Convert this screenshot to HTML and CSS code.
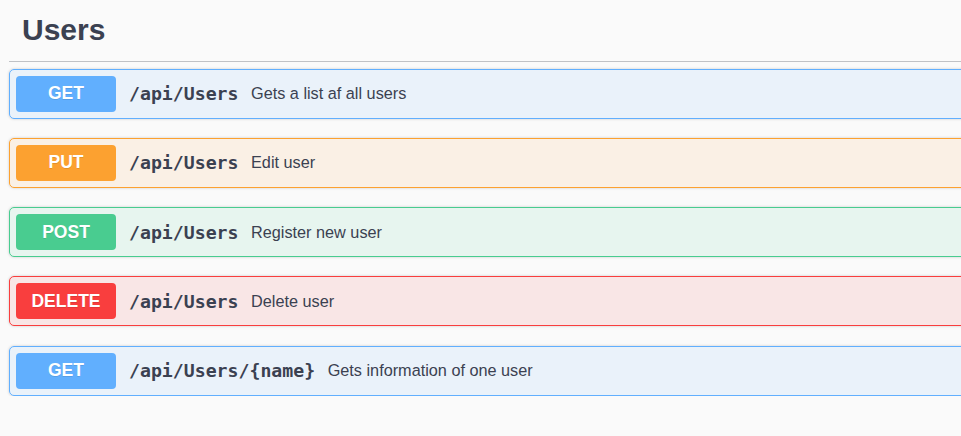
FILE: index.html
```html
<!DOCTYPE html>
<html lang="en">
<head>
<meta charset="utf-8">
<title>Users</title>
<link rel="stylesheet" href="styles.css">
</head>
<body>
<section class="tag-section">
  <h4 class="tag-title">Users</h4>
  <div class="ops">
    <div class="opblock opblock-get">
      <span class="method">GET</span>
      <span class="path">/api/Users</span>
      <span class="desc">Gets a list af all users</span>
    </div>
    <div class="opblock opblock-put">
      <span class="method">PUT</span>
      <span class="path">/api/Users</span>
      <span class="desc">Edit user</span>
    </div>
    <div class="opblock opblock-post">
      <span class="method">POST</span>
      <span class="path">/api/Users</span>
      <span class="desc">Register new user</span>
    </div>
    <div class="opblock opblock-delete">
      <span class="method">DELETE</span>
      <span class="path">/api/Users</span>
      <span class="desc">Delete user</span>
    </div>
    <div class="opblock opblock-get">
      <span class="method">GET</span>
      <span class="path">/api/Users/{name}</span>
      <span class="desc">Gets information of one user</span>
    </div>
  </div>
</section>
</body>
</html>
```

FILE: styles.css
```css
html, body {
  margin: 0;
  padding: 0;
  background: #fafafa;
  overflow: hidden;
}

body {
  font-family: "Liberation Sans", Arial, sans-serif;
  color: #3b4151;
}

.tag-section {
  width: 1000px;
  padding-left: 9px;
}

.tag-title {
  margin: 0 0 7px 0;
  padding: 11.5px 25px 13px 13px;
  font-size: 30px;
  line-height: 36px;
  font-weight: 700;
  color: #3b4151;
  border-bottom: 1px solid rgba(59, 65, 81, 0.3);
}

.ops {
  display: flex;
  flex-direction: column;
  gap: 19.3px;
}

.opblock {
  display: flex;
  align-items: center;
  height: 50px;
  box-sizing: border-box;
  padding: 0 6px;
  border: 1px solid #000;
  border-radius: 5px;
  box-shadow: 0 0 3px rgba(0, 0, 0, 0.19);
}

.method {
  width: 100px;
  height: 36px;
  box-sizing: border-box;
  display: flex;
  align-items: center;
  justify-content: center;
  font-family: "Liberation Sans", Arial, sans-serif;
  font-size: 17.5px;
  font-weight: 700;
  color: #fff;
  border-radius: 4px;
  text-shadow: 0 1px 0 rgba(0, 0, 0, 0.1);
}

.path {
  padding: 0 12.5px 0 13px;
  font-family: "DejaVu Sans Mono", "Liberation Mono", monospace;
  font-size: 18.2px;
  font-weight: 700;
  color: #3b4151;
}

.desc {
  font-size: 16.25px;
  color: #3b4151;
}

.opblock-get {
  background: rgba(97, 175, 254, 0.1);
  border-color: #61affe;
}
.opblock-get .method { background: #61affe; }

.opblock-put {
  background: rgba(252, 161, 48, 0.1);
  border-color: #fca130;
}
.opblock-put .method { background: #fca130; }

.opblock-post {
  background: rgba(73, 204, 144, 0.1);
  border-color: #49cc90;
}
.opblock-post .method { background: #49cc90; }

.opblock-delete {
  background: rgba(249, 62, 62, 0.1);
  border-color: #f93e3e;
}
.opblock-delete .method { background: #f93e3e; }
```
